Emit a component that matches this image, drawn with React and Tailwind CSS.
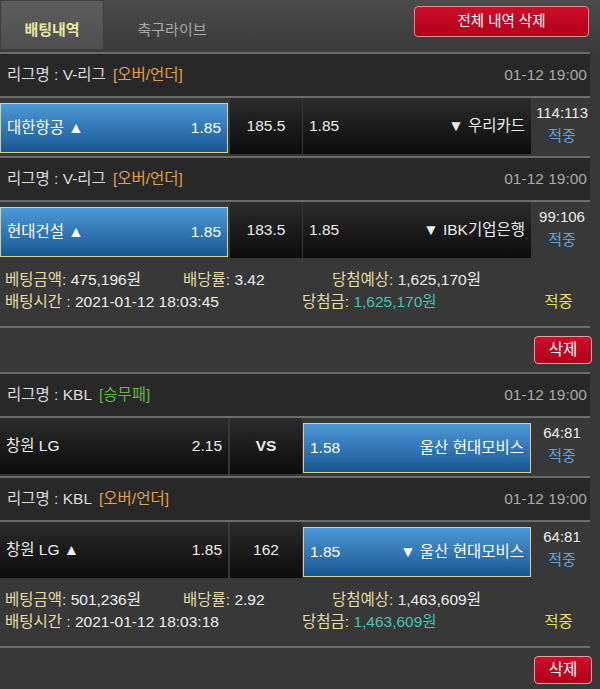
import React from 'react';

const bets = [
  {
    games: [
      { league: 'V-리그', type: '오버/언더', typeClass: 'text-[#e3a04c]', date: '01-12 19:00', left: '대한항공 ▲', leftOdds: '1.85', center: '185.5', rightOdds: '1.85', right: '▼ 우리카드', score: '114:113', pick: 'left' },
      { league: 'V-리그', type: '오버/언더', typeClass: 'text-[#e3a04c]', date: '01-12 19:00', left: '현대건설 ▲', leftOdds: '1.85', center: '183.5', rightOdds: '1.85', right: '▼ IBK기업은행', score: '99:106', pick: 'left' },
    ],
    amount: '475,196원', rate: '3.42', expect: '1,625,170원', time: '2021-01-12 18:03:45', win: '1,625,170원',
  },
  {
    games: [
      { league: 'KBL', type: '승무패', typeClass: 'text-[#5dbb3e]', date: '01-12 19:00', left: '창원 LG', leftOdds: '2.15', center: 'VS', rightOdds: '1.58', right: '울산 현대모비스', score: '64:81', pick: 'right' },
      { league: 'KBL', type: '오버/언더', typeClass: 'text-[#e3a04c]', date: '01-12 19:00', left: '창원 LG ▲', leftOdds: '1.85', center: '162', rightOdds: '1.85', right: '▼ 울산 현대모비스', score: '64:81', pick: 'right' },
    ],
    amount: '501,236원', rate: '2.92', expect: '1,463,609원', time: '2021-01-12 18:03:18', win: '1,463,609원',
  },
];

function Line() {
  return <div className="h-[2px] w-[590px] bg-[#6b6b6b]" />;
}

function LeagueRow({ game }) {
  return (
    <div className="flex h-[42px] w-[590px] items-center justify-between bg-[#282828] pl-[7px] pr-[3px]">
      <div className="text-[#dcdcdc]">
        리그명 : {game.league}
        <span className={`ml-[7px] ${game.typeClass}`}>[{game.type}]</span>
      </div>
      <div className="text-[#a9a9a9]">{game.date}</div>
    </div>
  );
}

function OddsCell({ selected, name, odds, nameFirst }) {
  const content = nameFirst ? (
    <>
      <span>{name}</span>
      <span>{odds}</span>
    </>
  ) : (
    <>
      <span>{odds}</span>
      <span>{name}</span>
    </>
  );
  if (selected) {
    return (
      <div className="h-[56px] w-[228px] pt-[5px]">
        <div className="flex h-[50px] items-center justify-between border border-[#d8d08c] bg-linear-to-b from-[#4e98d8] to-[#165894] px-[6px] text-white">
          {content}
        </div>
      </div>
    );
  }
  return (
    <div className="flex h-[56px] w-[228px] items-center justify-between bg-linear-to-b from-[#2c2c2c] to-[#0c0c0c] px-[6px] text-[#ececec]">
      {content}
    </div>
  );
}

function MatchRow({ game }) {
  return (
    <div className="flex h-[58px] w-[590px]">
      <OddsCell selected={game.pick === 'left'} name={game.left} odds={game.leftOdds} nameFirst />
      <div className="w-[2px]" />
      <div className={`flex h-[56px] w-[72px] items-center justify-center bg-linear-to-b from-[#2c2c2c] to-[#0c0c0c] text-[#ececec] ${game.center === 'VS' ? 'font-bold' : ''}`}>
        {game.center}
      </div>
      <div className="w-[1px]" />
      <OddsCell selected={game.pick === 'right'} name={game.right} odds={game.rightOdds} />
      <div className="flex w-[59px] flex-col items-center pt-[3px] pl-[3px] text-[15px] leading-[23px]">
        <span className="text-[#ececec]">{game.score}</span>
        <span className="text-[#5fa3dc]">적중</span>
      </div>
    </div>
  );
}

function InfoRow({ bet }) {
  return (
    <div className="h-[66px] w-[590px] pt-[9px] pl-[5px] leading-[22px] text-[#eeeeee]">
      <div className="flex">
        <div className="w-[178px]"><span className="text-[#e6dca2]">베팅금액:</span> {bet.amount}</div>
        <div className="w-[149px]"><span className="text-[#e6dca2]">배당률:</span> {bet.rate}</div>
        <div><span className="text-[#e6dca2]">당첨예상:</span> {bet.expect}</div>
      </div>
      <div className="flex">
        <div className="w-[297px]"><span className="text-[#e6dca2]">배팅시간 :</span> {bet.time}</div>
        <div className="flex-1"><span className="text-[#e6dca2]">당첨금:</span> <span className="text-[#42c4b6]">{bet.win}</span></div>
        <div className="w-[59px] pr-[4px] text-center text-[#e8e04e]">적중</div>
      </div>
    </div>
  );
}

function DeleteRow() {
  return (
    <div className="flex h-[44px] w-[590px] items-center justify-end">
      <button className="-mr-[2px] h-[28px] w-[58px] rounded-[4px] border border-[#e2a0a8] bg-linear-to-b from-[#cc0e2a] to-[#b2001a] text-white">
        삭제
      </button>
    </div>
  );
}

export default function App() {
  return (
    <div className="min-h-[689px] w-[600px] overflow-hidden bg-[#383838] font-['Liberation_Sans','Noto_Sans_CJK_KR',sans-serif] text-[15.5px]">
      <header className="flex h-[52px] items-start bg-linear-to-b from-[#4b4b4b] to-[#3a3a3a]">
        <div className="flex h-[50px] w-[104px] items-center justify-center border border-[#404040] bg-linear-to-b from-[#5c5c5c] to-[#4f4f4f] pt-[10px] text-[15px] font-bold text-[#e8e8a2]">
          배팅내역
        </div>
        <div className="flex h-[50px] w-[136px] items-center justify-center pt-[10px] text-[15px] text-[#a8a8a8]">
          축구라이브
        </div>
        <button className="mt-[6px] mr-[11px] ml-auto h-[31px] w-[175px] rounded-[4px] border border-[#e08c98] bg-linear-to-b from-[#cc0e2a] to-[#b2001a] text-[14.5px] text-white">
          전체 내역 삭제
        </button>
      </header>
      <Line />
      {bets.map((bet, i) => (
        <div key={i}>
          {bet.games.map((game, j) => (
            <div key={j}>
              {j > 0 && <Line />}
              <LeagueRow game={game} />
              <Line />
              <MatchRow game={game} />
            </div>
          ))}
          <InfoRow bet={bet} />
          <Line />
          <DeleteRow />
          <Line />
        </div>
      ))}
    </div>
  );
}
